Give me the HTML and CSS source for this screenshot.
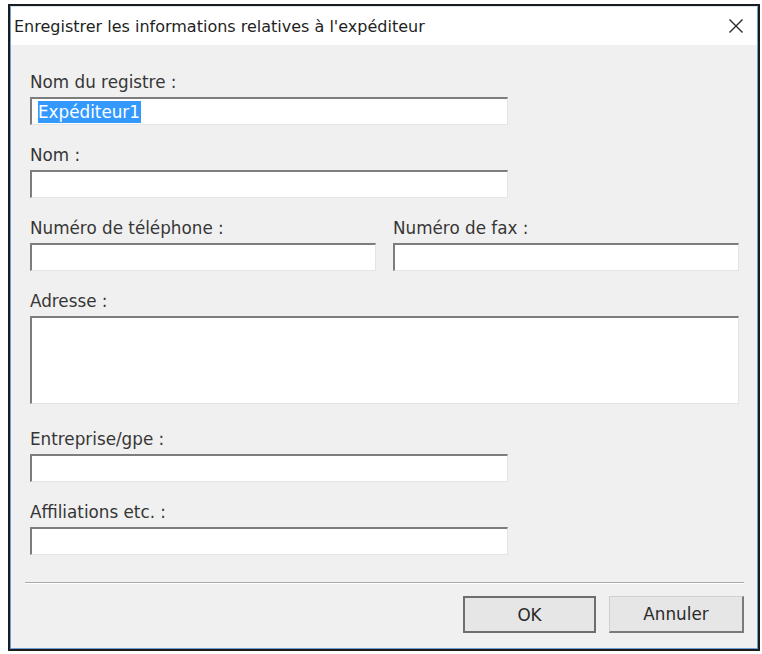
FILE: index.html
```html
<!DOCTYPE html>
<html lang="fr">
<head>
<meta charset="utf-8">
<title>Enregistrer les informations relatives à l'expéditeur</title>
<link rel="stylesheet" href="styles.css">
</head>
<body>
<div class="window">
  <div class="frame">
    <div class="titlebar">
      <span class="title">Enregistrer les informations relatives à l'expéditeur</span>
      <span class="close">
        <svg width="16" height="16" viewBox="0 0 16 16"><path d="M1.5 1.5 L14.5 14.5 M14.5 1.5 L1.5 14.5" stroke="#2b2b2b" stroke-width="1.4" fill="none"/></svg>
      </span>
    </div>
    <div class="content">
      <div class="field">
        <div class="label">Nom du registre :</div>
        <div class="edit short"><span class="sel">Expéditeur1</span></div>
      </div>
      <div class="field">
        <div class="label">Nom :</div>
        <div class="edit short"></div>
      </div>
      <div class="row">
        <div class="field half">
          <div class="label">Numéro de téléphone :</div>
          <div class="edit"></div>
        </div>
        <div class="field half">
          <div class="label">Numéro de fax :</div>
          <div class="edit"></div>
        </div>
      </div>
      <div class="field address">
        <div class="label">Adresse :</div>
        <div class="edit tall"></div>
      </div>
      <div class="field">
        <div class="label">Entreprise/gpe :</div>
        <div class="edit short"></div>
      </div>
      <div class="field">
        <div class="label">Affiliations etc. :</div>
        <div class="edit short"></div>
      </div>
      <div class="separator"></div>
      <div class="buttons">
        <div class="btn default">OK</div>
        <div class="btn">Annuler</div>
      </div>
    </div>
  </div>
</div>
</body>
</html>
```
FILE: styles.css
```css
html, body {
  margin: 0;
  padding: 0;
  background: #ffffff;
}
body {
  font-family: "DejaVu Sans", sans-serif;
  font-size: 16.8px;
  color: #363636;
}
.window {
  margin: 4px 0 0 8px;
  width: 752px;
  height: 647px;
  box-sizing: border-box;
  border: 2px solid #1c1c1c;
}
.frame {
  height: 100%;
  box-sizing: border-box;
  border: 1px solid #6d9fd6;
  border-top-color: #d6e4f3;
  background: #f0f0f0;
  display: flex;
  flex-direction: column;
}
.titlebar {
  height: 38px;
  background: #ffffff;
  display: flex;
  align-items: center;
  justify-content: space-between;
  padding-left: 3px;
}
.title {
  color: #1f1f1f;
  font-size: 16px;
}
.close {
  width: 42px;
  display: flex;
  justify-content: center;
  align-items: center;
}
.close svg {
  display: block;
}
.content {
  flex: 1;
  padding: 27px 18px 0 19px;
  display: flex;
  flex-direction: column;
}
.field {
  display: flex;
  flex-direction: column;
  margin-bottom: 20px;
}
.field.address {
  margin-bottom: 25px;
}
.row {
  display: flex;
  gap: 17px;
}
.half {
  flex: 1;
}
.label {
  height: 20px;
  line-height: 20px;
  margin-bottom: 5px;
  white-space: nowrap;
}
.edit {
  height: 28px;
  box-sizing: border-box;
  background: #ffffff;
  border-top: 2px solid #7d7d7d;
  border-left: 2px solid #7d7d7d;
  border-right: 1px solid #e4e4e4;
  border-bottom: 1px solid #e4e4e4;
  padding: 2px 0 0 6px;
  display: flex;
  align-items: flex-start;
}
.edit.short {
  width: 478px;
}
.edit.tall {
  height: 88px;
}
.sel {
  background: #3399ff;
  color: #ffffff;
  height: 22px;
  line-height: 22px;
  padding-right: 1px;
}
.separator {
  margin: 7px -5px 0 -5px;
  height: 1px;
  background: #a9a9a9;
  border-bottom: 1px solid #ffffff;
}
.buttons {
  display: flex;
  justify-content: flex-end;
  gap: 13px;
  margin-top: 12px;
  padding-right: 13px;
  margin-right: -18px;
}
.btn {
  width: 135px;
  height: 37px;
  box-sizing: border-box;
  background: #e6e6e6;
  border-top: 1px solid #cfcfcf;
  border-left: 1px solid #cfcfcf;
  border-right: 2px solid #7a7a7a;
  border-bottom: 2px solid #7a7a7a;
  display: flex;
  align-items: center;
  justify-content: center;
  color: #2a2a2a;
}
.btn.default {
  width: 133px;
  border: 2px solid #6e6e6e;
}
```
